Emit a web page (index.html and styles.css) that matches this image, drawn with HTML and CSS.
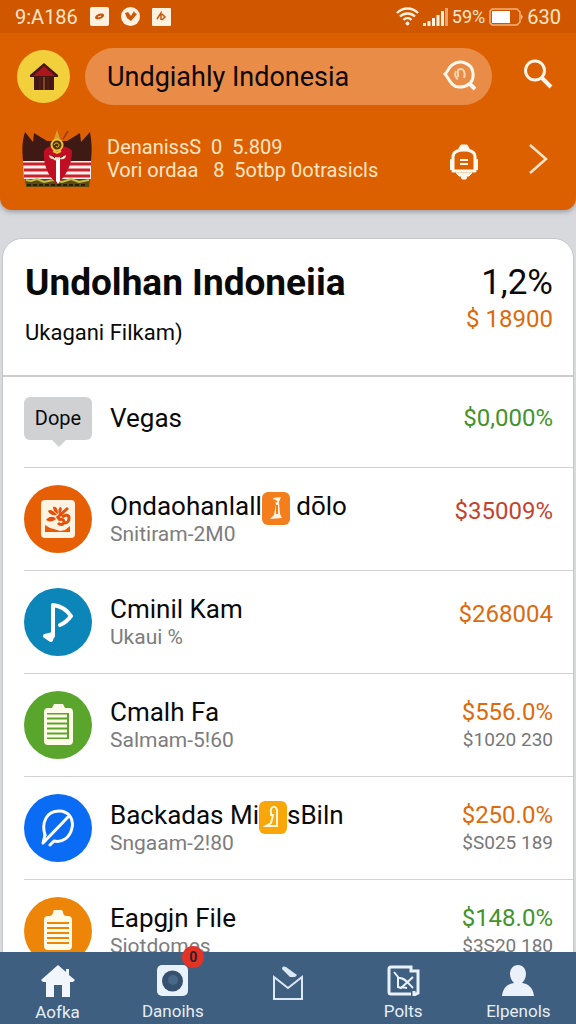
FILE: index.html
```html
<!DOCTYPE html>
<html lang="id">
<head>
    <meta charset="UTF-8">
    <meta name="viewport" content="width=device-width, initial-scale=1.0">
    <title>Undolhan Indoneiia</title>
    <link rel="stylesheet" href="styles.css">
</head>
<body>
    <header class="header">
        <!-- Status bar -->
        <div class="status">
            <span>9:A186</span>
            <svg class="status-app" width="19" height="19" viewBox="0 0 19 19">
                <rect width="19" height="19" rx="2" fill="#fff1e0"/>
                <path d="M5 11c0-4 8-6 9-3s-8 6-9 3z" fill="#c9560a"/>
                <path d="M8 10l3-1" stroke="#fff1e0"/>
            </svg>
            <svg class="status-app" width="19" height="19" viewBox="0 0 19 19">
                <circle cx="9.500" cy="9.500" r="9.500" fill="#fff1e0"/>
                <path d="M4 6l3-1 3 4 3-5 1 2 2 1-6 7-4-3z" fill="#c9560a"/>
            </svg>
            <svg class="status-app" width="19" height="18" viewBox="0 0 19 18">
                <rect width="19" height="18" rx="1" fill="#fff1e0"/>
                <path d="M5 11l4-6v7M10 6l3 3-3 3" fill="none" stroke="#c9560a" stroke-width="1.500"/>
            </svg>
            <span class="spacer"></span>
            <svg width="23" height="19" viewBox="0 0 23 19" fill="none" stroke="#fff1e0" stroke-width="2.400">
                <path d="M1 6c6-6 15-6 21 0M4 9.500c4-4 11-4 15 0M7.500 13c2-2.500 6-2.500 8 0"/>
                <circle cx="11.500" cy="16.500" r="1.500" fill="#fff1e0" stroke-width="1"/>
            </svg>
            <svg width="25" height="18" viewBox="0 0 25 18" fill="#fff1e0">
                <path d="M0 15h3v3H0zM4.500 13h3v5h-3zM9 10h3v8H9zM13.500 7h3v11h-3zM18 3h3v15h-3z"/>
                <path d="M22 0h3v18h-3z" opacity="0.500"/>
            </svg>
            <span class="percent">59%</span>
            <svg width="34" height="18" viewBox="0 0 34 18">
                <path d="M3 1h25l3 3v10l-3 3H3l-2-2V3z" fill="none" stroke="#f6b37c" stroke-width="1.500"/>
                <path d="M32 6l2 3-2 3z" fill="#f6b37c"/>
                <rect x="3" y="3" width="18" height="12" fill="#fff"/>
            </svg>
            <span>630</span>
        </div>

        <!-- Search -->
        <div class="search-row">
            <a class="home" href="#" aria-label="Home">
                <svg width="28" height="28" viewBox="0 0 28 28">
                    <path d="M4 12h20v15H4z" fill="#431712"/>
                    <path d="M14 14v13" stroke="#b5802c"/>
                    <path d="M10 14v13M18 14v13" stroke="#5b2416"/>
                    <path d="M14 0l14 12v2H0v-2z" fill="#431712"/>
                    <path d="M14 3l11 10H3z" fill="#a9161c"/>
                </svg>
            </a>
            <form class="search">
                <input type="text" value="Undgiahly Indonesia" aria-label="Search">
                <button type="button" aria-label="Scan">
                    <svg width="33" height="32" viewBox="0 0 33 32" fill="none" stroke="#fff8ee">
                        <path d="M2 15c3-2 3-6 7-9 8-6 20-2 21 8s-6 14-14 14C8 28 6 19 2 15z" stroke-width="3"/>
                        <path d="M26 24l6 6" stroke-width="4"/>
                        <path d="M13 12c-2 4 0 7 2 8M15 18v-7c5-3 8 2 6 8" stroke="#fbd5ae" stroke-width="2"/>
                    </svg>
                </button>
            </form>
            <button class="icon-button find" type="button" aria-label="Find">
                <svg width="30" height="30" viewBox="0 0 30 30" fill="none" stroke="#fff4e6" stroke-width="3">
                    <circle cx="12" cy="11.500" r="9.500"/>
                    <path d="M18 18l10 10" stroke-width="4"/>
                </svg>
            </button>
        </div>

        <!-- Account info -->
        <div class="info-row">
            <svg width="70" height="58" viewBox="0 0 70 58">
                <path d="M3 2l8 10 1-9 13 8h20l13-8 1 9 9-10c2 12 2 19 1 29H1C0 18 0 12 3 2z" fill="#3f1a14"/>
                <path d="M1 31h68v18H2z" fill="#fbeff0"/>
                <path d="M1 34h68M2 40h66M2 46h66" stroke="#c9222b" stroke-width="3"/>
                <path d="M3 49h65l-1 8H4z" fill="#5d4a13"/>
                <path d="M4 50l5 1 6-2 7 3 9-2 9 2 9-3 8 3 10-2" fill="none" stroke="#c3bf47" stroke-width="2"/>
                <path d="M5 55h60" stroke="#2c1c0b" stroke-width="2" stroke-dasharray="4 2"/>
                <path d="M22 21c2-4 6-5 13-5s12 1 15 5c0 14-6 25-15 33-9-8-14-19-13-33z" fill="#c00f22"/>
                <path d="M34 29h4v22l-2 3-2-3z" fill="#fff"/>
                <path d="M27 25c5 3 12 3 17 0 0 4-3 5-6 4-3 2-5 2-7 0-3 0-4-2-4-4z" fill="#f2e3cf"/>
                <path d="M31 26l2 2M38 28l3-2" stroke="#3b1712"/>
                <path d="M35 0l3 9h-6z" fill="#d8a02c"/>
                <path d="M46 1l-5 8" stroke="#a1381a" stroke-width="1.500"/>
                <circle cx="35" cy="15" r="5.500" fill="#54310c" stroke="#e9c53b" stroke-width="2"/>
                <path d="M32 15c1-3 5-2 5 0s-2 3-3 1" fill="none" stroke="#e9c53b"/>
                <path d="M31 21l4 2 4-2" fill="none" stroke="#e9c53b" stroke-width="2"/>
            </svg>
            <div class="info-text">
                <div>DenanissS&nbsp; 0&nbsp; 5.809</div>
                <div>Vori ordaa&nbsp; &nbsp;8&nbsp; 5otbp 0otrasicls</div>
            </div>
            <button class="icon-button bell" type="button" aria-label="Notifications">
                <svg width="28" height="36" viewBox="0 0 28 36" fill="none" stroke="#fff8ee">
                    <path d="M9 5c0-2 1-2 2-4h6c1 2 2 2 2 4z" fill="#fff8ee"/>
                    <path d="M3 27V13c0-5 4-7 11-7s11 2 11 7v14z" stroke-width="3" stroke-linejoin="round"/>
                    <path d="M1 15v11M27 15v11" stroke-width="2"/>
                    <path d="M6 29h16l-3 3h-2l-1 3h-4l-1-3H9z" fill="#fff8ee"/>
                    <path d="M10 16h8M10 20h8" stroke-width="2"/>
                </svg>
            </button>
            <button class="icon-button" type="button" aria-label="More">
                <svg width="20" height="30" viewBox="0 0 20 30" fill="none" stroke="#ffe3c6" stroke-width="2.500">
                    <path d="M2 1l16 14L2 29"/>
                </svg>
            </button>
        </div>
    </header>

    <main class="content">
        <div class="card">
            <div class="summary">
                <div>
                    <h1>Undolhan Indoneiia</h1>
                    <p>Ukagani Filkam)</p>
                </div>
                <div class="summary-value">
                    <div class="rate">1,2%</div>
                    <div class="price">$ 18900</div>
                </div>
            </div>

            <div class="row row-small">
                <div class="tag">Dope</div>
                <div class="name">Vegas</div>
                <div class="amount green">$0,000%</div>
            </div>

            <div class="row">
                <div class="icon red-orange">
                    <svg width="36" height="40" viewBox="0 0 36 40">
                        <rect x="1" y="1" width="34" height="38" rx="4" fill="#fff3e2"/>
                        <path d="M5 26l5 3 4 1 6 2 5-1 5-4v6H5z" fill="#e65a08"/>
                        <g fill="#e2500a">
                            <path d="M8 12c2-2 5-1 9 4-4 1-8-1-9-4zM13 8c3-1 5 2 5 7-3-1-5-4-5-7zM20 8c3 0 2 5-1 8-1-3-1-6 1-8zM6 21c3-4 8-4 10-1-3 3-7 3-10 1z"/>
                        </g>
                        <g fill="none" stroke="#e2500a" stroke-width="3">
                            <path d="M28 9l-9 8M22 18c4-3 7-2 7 1s-2 5-4 5M19 21c3-2 5 0 5 2s-3 4-6 1M17 17l3 4"/>
                        </g>
                    </svg>
                </div>
                <div class="text">
                    <div class="name">Ondaohanlall<svg class="badge" width="28" height="33" viewBox="0 0 28 33">
                        <rect width="28" height="33" rx="6" fill="#f47d1c"/>
                        <path d="M11 6l8-1-2 5 1 12 2 4-12 1 4-4 2-11z" fill="#fff3e2"/>
                        <path d="M12 8l3 2M15 13v9" stroke="#f47d1c" stroke-width="2"/>
                    </svg> dōlo</div>
                    <div class="sub">Snitiram-2M0</div>
                </div>
                <div class="value">
                    <div class="amount single red">$35009%</div>
                </div>
            </div>

            <div class="row">
                <div class="icon teal">
                    <svg width="34" height="42" viewBox="0 0 34 42" fill="none" stroke="#fff" stroke-width="4" stroke-linecap="round" stroke-linejoin="round">
                        <path d="M12 35V4c8 1 14 5 18 11-3 4-6 7-11 9"/>
                        <path d="M12 33l-8 2 6 4z" fill="#fff"/>
                    </svg>
                </div>
                <div class="text">
                    <div class="name">Cminil Kam</div>
                    <div class="sub">Ukaui %</div>
                </div>
                <div class="value">
                    <div class="amount single orange">$268004</div>
                </div>
            </div>

            <div class="row">
                <div class="icon lime">
                    <svg width="30" height="42" viewBox="0 0 30 42">
                        <path d="M5 4h4l2-4h9l2 4h4q4 0 4 4v29q0 4-4 4H5q-4 0-4-4V8q0-4 4-4z" fill="#fffbe9"/>
                        <path d="M4 9h22v26H4z" fill="#5aa52b"/>
                        <path d="M4 12h20M4 17h20M4 22h20M4 27h20M4 32h20" stroke="#fffbe9" stroke-width="3"/>
                    </svg>
                </div>
                <div class="text">
                    <div class="name">Cmalh Fa</div>
                    <div class="sub">Salmam-5!60</div>
                </div>
                <div class="value">
                    <div class="amount orange">$556.0%</div>
                    <div class="sub-amount">$1020 230</div>
                </div>
            </div>

            <div class="row">
                <div class="icon blue">
                    <svg width="34" height="38" viewBox="0 0 34 38" fill="none" stroke="#fff" stroke-width="3" stroke-linecap="round" stroke-linejoin="round">
                        <path d="M4 26C0 13 6 2 18 2c10 0 15 8 13 17-2 9-9 15-18 13l-4 4"/>
                        <path d="M27 8L2 34l2-8"/>
                    </svg>
                </div>
                <div class="text">
                    <div class="name">Backadas Mi<svg class="badge" width="28" height="33" viewBox="0 0 28 33">
                        <rect width="28" height="33" rx="6" fill="#f9a60b"/>
                        <path d="M12 12c-2-8 7-8 6-1v14H7l5-3 2-8h-2z" fill="none" stroke="#fff8dc" stroke-width="2"/>
                    </svg>sBiln</div>
                    <div class="sub">Sngaam-2!80</div>
                </div>
                <div class="value">
                    <div class="amount orange">$250.0%</div>
                    <div class="sub-amount">$S025 189</div>
                </div>
            </div>

            <div class="row">
                <div class="icon amber">
                    <svg width="30" height="42" viewBox="0 0 30 42">
                        <path d="M5 6h2q3-1 3-4 0-2 2-2h6q2 0 2 2 0 3 3 4h2q4 0 4 4v26q0 4-4 4H5q-4 0-4-4V10q0-4 4-4z" fill="#fffbe9"/>
                        <path d="M4 13h22M4 18h22M4 23h22M4 28h22M4 33h22" stroke="#ed8508" stroke-width="2"/>
                    </svg>
                </div>
                <div class="text">
                    <div class="name">Eapgjn File</div>
                    <div class="sub">Siotdomes</div>
                </div>
                <div class="value">
                    <div class="amount green">$148.0%</div>
                    <div class="sub-amount">$3S20 180</div>
                </div>
            </div>
        </div>
    </main>

    <!-- Bottom navigation -->
    <nav class="nav">
        <a href="#">
            <svg width="34" height="32" viewBox="0 0 34 32" fill="#f1f6fc">
                <path d="M17 0l8 7V4h3v6l6 5-2 2h-3v15h-8V20h-8v12H5V17H2l-2-2z"/>
            </svg>
            <span>Aofka</span>
        </a>
        <a href="#">
            <span class="nav-icon">
                <svg width="31" height="31" viewBox="0 0 31 31">
                    <rect width="31" height="31" rx="5" fill="#e9f1fa"/>
                    <circle cx="15.500" cy="16" r="10.500" fill="#35516f"/>
                    <circle cx="16" cy="15" r="5" fill="#4a6888"/>
                </svg>
                <span class="count">0</span>
            </span>
            <span>Danoihs</span>
        </a>
        <a href="#" aria-label="Mail">
            <svg width="30" height="36" viewBox="0 0 30 36" fill="none" stroke="#dce8f4" stroke-width="2">
                <path d="M1 12v22h28V12L15 23z"/>
                <path d="M9 4c0-3 2-3 4-2l11 8-2 2h-5z" fill="#dce8f4" stroke="none"/>
            </svg>
        </a>
        <a href="#">
            <svg width="33" height="31" viewBox="0 0 33 31" fill="none" stroke="#e9f1fa" stroke-width="3">
                <path d="M24 29H4q-2 0-2-2V4q0-2 2-2h20v4h7v22l-4 2v-4"/>
                <path d="M7 7l4 5v10l3 1 12-11M12 13c5-1 9 5 14 10M14 22l6 1" stroke-width="2"/>
            </svg>
            <span>Polts</span>
        </a>
        <a href="#">
            <svg width="32" height="31" viewBox="0 0 32 31" fill="#eaf1fa">
                <path d="M16 0c5 0 8 4 8 9 0 4-2 7-4 9 7 1 11 5 12 13H0c1-8 5-12 12-13-2-2-4-5-4-9 0-5 3-9 8-9z"/>
            </svg>
            <span>Elpenols</span>
        </a>
    </nav>
</body>
</html>
```
FILE: styles.css
```css
* {
    box-sizing: border-box;
}

body {
    font-family: Roboto, Arial, sans-serif;
    margin: 0;
    height: 100vh;
    display: flex;
    flex-direction: column;
    background-color: #d8d9dc;
    color: #0a0a0a;
}

h1,
p {
    margin: 0;
}

button {
    padding: 0;
    border: none;
    background: none;
    cursor: pointer;
}

svg {
    flex-shrink: 0;
}

.header {
    background-color: #dc6000;
    color: #ffe6c8;
    border-radius: 0 0 12px 12px;
    box-shadow: 0 2px 5px #9a9ba2;
    padding-bottom: 22px;
    overflow: hidden;
    flex-shrink: 0;
}

.status {
    display: flex;
    align-items: center;
    gap: 4px;
    height: 33px;
    padding: 0 15px;
    background-color: #d05600;
    font-size: 20px;
}

.status-app {
    margin-left: 8px;
}

.spacer {
    flex: 1;
}

.percent {
    font-size: 18px;
}

.search-row {
    display: flex;
    align-items: center;
    gap: 15px;
    padding: 15px 23px 0 17px;
}

.home {
    display: flex;
    flex-shrink: 0;
    align-items: center;
    justify-content: center;
    width: 53px;
    height: 53px;
    border-radius: 50%;
    background-color: #f2d03c;
}

.search {
    flex: 1;
    min-width: 0;
    display: flex;
    align-items: center;
    height: 57px;
    margin-right: 16px;
    padding: 0 16px 0 22px;
    border-radius: 29px;
    background-color: #e98c48;
}

.search input {
    flex: 1;
    min-width: 0;
    padding: 0;
    border: none;
    outline: none;
    background: none;
    font-family: inherit;
    font-size: 27px;
    color: #0d0500;
}

.icon-button {
    display: flex;
}

.find {
    padding-bottom: 6px;
}

.info-row {
    display: flex;
    align-items: center;
    gap: 15px;
    padding: 25px 28px 0 22px;
}

.info-text {
    flex: 1;
    font-size: 20px;
    line-height: 23px;
    white-space: nowrap;
}

.bell {
    margin-right: 35px;
    padding-top: 6px;
}

.content {
    flex: 1;
    min-height: 0;
    overflow: hidden;
    padding: 28px 2px 0;
}

.card {
    background-color: #fff;
    border: 1px solid #c6c7c9;
    border-radius: 20px 20px 0 0;
}

.summary {
    display: flex;
    justify-content: space-between;
    height: 138px;
    padding: 20px 20px 0 22px;
    border-bottom: 2px solid #cbccce;
}

.summary h1 {
    font-size: 37px;
    line-height: 48px;
}

.summary p {
    font-size: 22px;
    line-height: 52px;
}

.summary-value {
    text-align: right;
}

.rate {
    font-size: 35px;
    line-height: 48px;
}

.price {
    font-size: 24px;
    line-height: 24px;
    color: #dd6a0c;
}

.row {
    display: flex;
    align-items: center;
    gap: 18px;
    min-height: 103px;
    margin-left: 21px;
    padding-right: 20px;
    border-bottom: 1px solid #d3d3d5;
}

.row-small {
    min-height: 91px;
    padding-bottom: 8px;
}

.tag {
    position: relative;
    width: 68px;
    border-radius: 6px;
    background-color: #cfd1d3;
    font-size: 20px;
    line-height: 43px;
    text-align: center;
}

.tag::after {
    content: "";
    position: absolute;
    top: 100%;
    left: 28px;
    border: 7px solid transparent;
    border-top-color: #cfd1d3;
    border-bottom: none;
}

.icon {
    display: flex;
    align-items: center;
    justify-content: center;
    width: 68px;
    height: 68px;
    border-radius: 50%;
}

.red-orange {
    background-color: #e65f05;
}

.teal {
    background-color: #0c86b8;
}

.lime {
    background-color: #5aa52b;
}

.blue {
    background-color: #0a6cf5;
}

.amber {
    background-color: #ed8508;
}

.text,
.name {
    flex: 1;
    white-space: nowrap;
}

.name {
    font-size: 26px;
    line-height: 30px;
}

.badge {
    vertical-align: middle;
    margin: -6px 0;
}

.sub {
    font-size: 21px;
    line-height: 26px;
    color: #7c7c7e;
}

.value {
    min-height: 56px;
    text-align: right;
}

.amount {
    font-size: 24px;
    line-height: 30px;
}

.single {
    line-height: 40px;
}

.sub-amount {
    font-size: 19px;
    line-height: 26px;
    color: #77777a;
}

.green {
    color: #43932a;
}

.red {
    color: #c4432f;
}

.orange {
    color: #dd6a0c;
}

.nav {
    position: relative;
    display: grid;
    grid-template-columns: repeat(5, 1fr);
    height: 72px;
    flex-shrink: 0;
    background-color: #3f5f80;
}

.nav a {
    display: flex;
    flex-direction: column;
    align-items: center;
    gap: 4px;
    padding-top: 13px;
    color: #e6eef7;
    font-size: 17px;
    line-height: 22px;
    text-decoration: none;
}

.nav-icon {
    position: relative;
    display: flex;
}

.count {
    position: absolute;
    top: -19px;
    right: -16px;
    width: 22px;
    height: 22px;
    border-radius: 50%;
    background-color: #e23325;
    color: #33202c;
    font-size: 14px;
    font-weight: bold;
    text-align: center;
}
```
